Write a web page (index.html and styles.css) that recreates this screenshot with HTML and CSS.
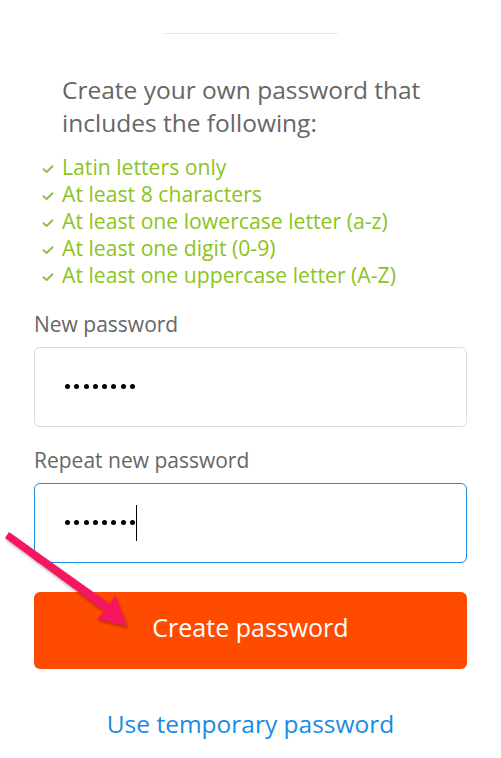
FILE: index.html
```html
<!DOCTYPE html>
<html lang="en">
<head>
<meta charset="utf-8">
<title>Create password</title>
<link rel="stylesheet" href="styles.css">
</head>
<body>
<main class="page">
  <hr class="divider">
  <h1 class="intro">Create your own password that includes the following:</h1>
  <ul class="rules">
    <li class="rule"><svg class="tick" viewBox="0 0 12 10" aria-hidden="true"><path d="M1.5 5.2 L4.6 8 L10.5 2.2"/></svg>Latin letters only</li>
    <li class="rule"><svg class="tick" viewBox="0 0 12 10" aria-hidden="true"><path d="M1.5 5.2 L4.6 8 L10.5 2.2"/></svg>At least 8 characters</li>
    <li class="rule"><svg class="tick" viewBox="0 0 12 10" aria-hidden="true"><path d="M1.5 5.2 L4.6 8 L10.5 2.2"/></svg>At least one lowercase letter (a-z)</li>
    <li class="rule"><svg class="tick" viewBox="0 0 12 10" aria-hidden="true"><path d="M1.5 5.2 L4.6 8 L10.5 2.2"/></svg>At least one digit (0-9)</li>
    <li class="rule"><svg class="tick" viewBox="0 0 12 10" aria-hidden="true"><path d="M1.5 5.2 L4.6 8 L10.5 2.2"/></svg>At least one uppercase letter (A-Z)</li>
  </ul>

  <form class="form">
    <label class="label">New password</label>
    <div class="field">
      <span class="mask" aria-label="hidden password"><i></i><i></i><i></i><i></i><i></i><i></i><i></i><i></i></span>
    </div>

    <label class="label label-second">Repeat new password</label>
    <div class="field field-focus">
      <span class="mask" aria-label="hidden password"><i></i><i></i><i></i><i></i><i></i><i></i><i></i><i></i></span>
      <span class="caret"></span>
    </div>

    <button type="button" class="submit">Create password</button>
  </form>

  <a class="alt-link" href="#">Use temporary password</a>

  <svg class="pointer" width="140" height="110" viewBox="0 0 140 110" aria-hidden="true">
    <defs>
      <filter id="drop" x="-20%" y="-20%" width="140%" height="140%">
        <feDropShadow dx="1" dy="2" stdDeviation="1.6" flood-color="#000" flood-opacity="0.35"/>
      </filter>
    </defs>
    <path filter="url(#drop)" fill="#f5135f"
          d="M5 18 L9 12 L110 84 L115 75 L127 106 L97 99 L104 91 Z"/>
  </svg>
</main>
</body>
</html>
```
FILE: styles.css
```css
* { box-sizing: border-box; }

html, body {
  margin: 0;
  padding: 0;
  background: #fff;
}

body {
  font-family: "Open Sans", "Noto Sans", sans-serif;
  color: #666;
}

.page {
  position: relative;
  width: 501px;
  padding: 33px 34px 0;
}

.divider {
  width: 175px;
  height: 1px;
  margin: 0 auto;
  border: 0;
  background: #e9e9e9;
}

.intro {
  margin: 39px 0 0 28px;
  max-width: 390px;
  font-size: 24.5px;
  line-height: 33px;
  font-weight: 400;
  color: #666;
}

.rules {
  list-style: none;
  margin: 14px 0 0 8px;
  padding: 0;
}

.rule {
  display: flex;
  align-items: center;
  font-size: 21.2px;
  line-height: 27px;
  color: #8cc31e;
}

.tick {
  width: 12px;
  height: 10px;
  margin: 4px 8px 0 0;
  flex: none;
}

.tick path {
  fill: none;
  stroke: #8bc34a;
  stroke-width: 2;
  stroke-linecap: round;
  stroke-linejoin: round;
}

.form {
  display: flex;
  flex-direction: column;
  margin-top: 23px;
}

.label {
  font-size: 21px;
  line-height: 26px;
  color: #666;
  margin-bottom: 10px;
}

.label-second {
  margin-top: 20px;
}

.field {
  position: relative;
  display: flex;
  align-items: center;
  height: 80px;
  padding: 0 30px;
  border: 1px solid #dcdcdc;
  border-radius: 6px;
}

.field-focus {
  border-color: #1e88e5;
}

.mask {
  display: flex;
  gap: 4.3px;
  margin-top: -1px;
}

.mask i {
  width: 5px;
  height: 5px;
  border-radius: 50%;
  background: #000;
}

.caret {
  width: 1px;
  height: 36px;
  margin-left: 1px;
  background: #000;
}

.submit {
  margin-top: 29px;
  height: 77px;
  padding: 0 0 8px;
  border: 0;
  border-radius: 6px;
  background: #ff4b00;
  color: #fff;
  font-family: "Open Sans", "Noto Sans", sans-serif;
  font-size: 25px;
  cursor: pointer;
}

.alt-link {
  display: block;
  margin-top: 38px;
  text-align: center;
  font-size: 24.5px;
  line-height: 34px;
  color: #1a8ae5;
  text-decoration: none;
}

/* callout arrow drawn over the form */
.pointer {
  position: absolute;
  left: 0;
  top: 520px;
}
```
